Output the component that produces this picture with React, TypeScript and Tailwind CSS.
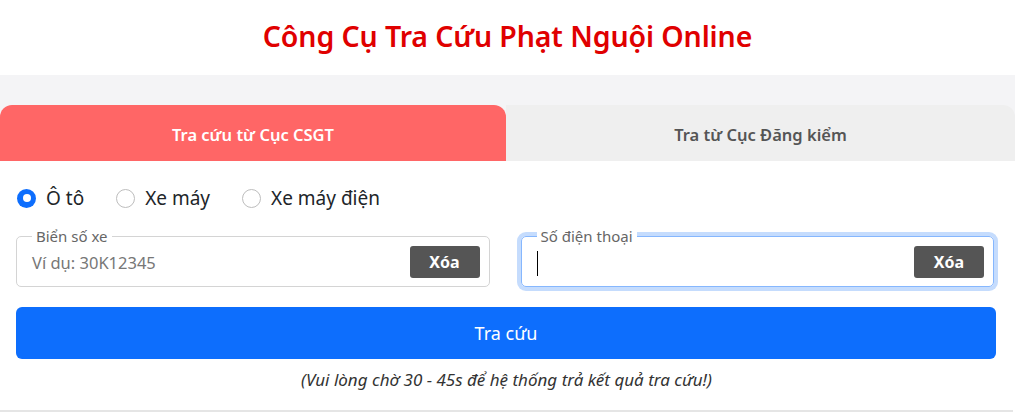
import React from "react";

const font = { fontFamily: '"Noto Sans", "Open Sans", sans-serif' };

function Radio({ checked, label }: { checked?: boolean; label: string }) {
  return (
    <label className="flex items-center gap-[10px] cursor-pointer">
      {checked ? (
        <span className="w-[19px] h-[19px] rounded-full bg-[#0d6efd] flex items-center justify-center">
          <span className="w-[8px] h-[8px] rounded-full bg-white" />
        </span>
      ) : (
        <span className="w-[19px] h-[19px] rounded-full border border-[#bdbdbd] bg-white" />
      )}
      <span className="text-[19px] text-[#212529]">{label}</span>
    </label>
  );
}

function Field({ label, placeholder, focused }: { label: string; placeholder?: string; focused?: boolean }) {
  return (
    <div
      className={
        "relative h-[51px] rounded-[5px] border pl-[15px] pr-[9px] flex items-center " +
        (focused ? "border-[#86b7fe] shadow-[0_0_0_4px_#c5dcfd]" : "border-[#d4d4d4]")
      }
    >
      <span className="absolute left-[15px] -top-[10px] px-[4px] bg-white text-[15px] leading-[18px] text-[#666]">
        {label}
      </span>
      <div className="flex-1 flex items-center pt-[4px]">
        {focused ? (
          <span className="w-[1.5px] h-[25px] bg-black" />
        ) : (
          <span className="text-[16.5px] text-[#777]">{placeholder}</span>
        )}
      </div>
      <button className="w-[70px] h-[32px] rounded-[3px] bg-[#555] text-white font-bold text-[16px]">
        Xóa
      </button>
    </div>
  );
}

export default function App() {
  return (
    <div style={font} className="w-[1015px] h-[413px] bg-white overflow-hidden">
      <div className="h-[75px] flex items-center justify-center">
        <h1 className="text-[28.5px] font-semibold text-[#e00000] tracking-[-0.1px] -mt-[2px]">
          Công Cụ Tra Cứu Phạt Nguội Online
        </h1>
      </div>
      <div className="bg-[#f4f4f6] pt-[30px]">
        <div className="flex h-[56px]">
          <div className="w-[506px] rounded-t-[12px] bg-[#ff6666] flex items-center justify-center pt-[4px] text-white font-semibold text-[16.5px]">
            Tra cứu từ Cục CSGT
          </div>
          <div className="flex-1 rounded-tr-[12px] bg-[#efefef] flex items-center justify-center pt-[4px] text-[#555] font-semibold text-[16.5px]">
            Tra từ Cục Đăng kiểm
          </div>
        </div>
      </div>
      <div className="bg-white px-[16px] pt-[22px] h-[251px] border-b-2 border-[#e5e5e5] mr-[2px]">
        <div className="flex items-center gap-[32px] h-[30px] pl-[1px]">
          <Radio checked label="Ô tô" />
          <Radio label="Xe máy" />
          <Radio label="Xe máy điện" />
        </div>
        <div className="grid grid-cols-2 gap-[31px] mt-[23px] pr-[3px]">
          <Field label="Biển số xe" placeholder="Ví dụ: 30K12345" />
          <Field label="Số điện thoại" focused />
        </div>
        <button className="mt-[20px] w-[980px] h-[52px] rounded-[6px] bg-[#0d6efd] text-white text-[18px]">
          Tra cứu
        </button>
        <p className="mt-[8px] text-center italic text-[17px] text-[#333]">
          (Vui lòng chờ 30 - 45s để hệ thống trả kết quả tra cứu!)
        </p>
      </div>
    </div>
  );
}
